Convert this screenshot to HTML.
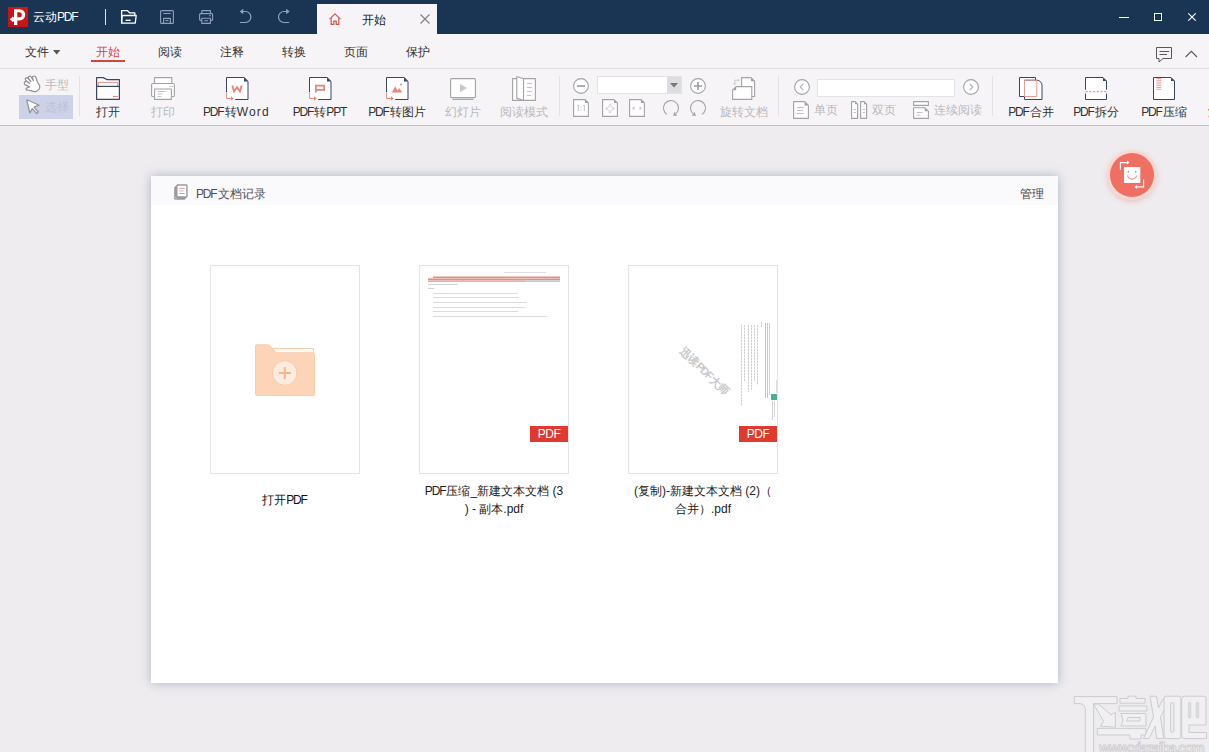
<!DOCTYPE html>
<html lang="zh">
<head>
<meta charset="utf-8">
<title>云动PDF</title>
<style>
*{box-sizing:border-box;margin:0;padding:0}
html,body{width:1209px;height:752px;overflow:hidden}
body{position:relative;background:#eeecef;font-family:"Liberation Sans",sans-serif;font-size:12px;color:#333;line-height:1}
.abs{position:absolute}
.t{position:absolute;white-space:nowrap;line-height:14px;height:14px}
.c{text-align:center}
svg{position:absolute;overflow:visible}
#title{position:absolute;left:0;top:0;width:1209px;height:34px;background:#1a3454}
#tab{position:absolute;left:317px;top:4px;width:120px;height:30px;background:#f6f4f7}
#menu{position:absolute;left:0;top:34px;width:1209px;height:34px;background:#f6f4f7}
#tool{position:absolute;left:0;top:68px;width:1209px;height:58px;background:#f6f4f7;border-top:1px solid #dedde0;border-bottom:1px solid #c0bfc3}
.sep{position:absolute;width:1px;background:#e3e2e6;top:76px;height:40px}
.g{color:#b9b9bb}
.d{color:#333}
#panel{position:absolute;left:151px;top:176px;width:907px;height:507px;background:#fff;box-shadow:0 0 10px rgba(128,140,165,.6)}
#phead{position:absolute;left:0;top:0;width:907px;height:29px;background:#faf9fc}
.card{position:absolute;top:265px;width:150px;height:209px;background:#fff;border:1px solid #e4e4e6}
.badge{position:absolute;width:38px;height:16px;background:#e03a30;color:#fff;font-size:12px;line-height:16px;text-align:center;top:426px}
.ln{position:absolute;height:1px;background:#dcdcdf}
.vl{position:absolute;width:1px;background:repeating-linear-gradient(to bottom,#d2d2d5 0 2px,#ececee 2px 3px)}
.l{letter-spacing:-1.2px}
</style>
</head>
<body>
<!-- TITLE BAR -->
<div id="title"></div>
<!-- logo -->
<svg style="left:8px;top:7px" width="20" height="20" viewBox="0 0 20 20">
  <defs><linearGradient id="lg" x1="0" y1="1" x2="1" y2="0"><stop offset="0" stop-color="#b5161d"/><stop offset="1" stop-color="#e3100f"/></linearGradient></defs>
  <rect width="20" height="20" fill="url(#lg)"/>
  <path d="M6 2.2h5.6a5.6 5.6 0 0 1 0 11.2H9.3V18H6v-4.1L4.8 15 1.8 12.3 4.8 9.6 6 10.7z M9.3 5.3v5h2a2.5 2.5 0 0 0 0-5z" fill="#fff" fill-rule="evenodd"/>
</svg>
<span class="t" style="left:33px;top:10px;color:#fff">云动<span class="l">PD</span>F</span>
<div class="abs" style="left:105px;top:9px;width:1px;height:16px;background:#dfe4ec"></div>
<!-- open -->
<svg style="left:120px;top:9px" width="17" height="16" viewBox="0 0 17 16" fill="none" stroke="#fff" stroke-width="1.3" stroke-linejoin="round">
  <path d="M1.6 14.2V1.6h5.6l2.4 2.2h5.2v2.7"/>
  <path d="M1.6 14.2 2.2 6.5h14l-1 7.7z"/>
  <path d="M5.6 11.3h5" stroke-width="1.4"/>
</svg>
<!-- save -->
<svg style="left:160px;top:10px" width="14" height="14" viewBox="0 0 14 14" fill="none" stroke="#8fa0bc" stroke-width="1.1" stroke-linejoin="round">
  <path d="M1.6.6h10.8a1 1 0 0 1 1 1v10.8a1 1 0 0 1-1 1H1.6a1 1 0 0 1-1-1V1.6a1 1 0 0 1 1-1z"/>
  <path d="M3.3 3.5h7.4"/>
  <path d="M3.6 13.4V8.4h6.8v5"/>
  <path d="M5.5 10.6h3"/>
</svg>
<!-- print -->
<svg style="left:199px;top:10px" width="15" height="14" viewBox="0 0 15 14" fill="none" stroke="#8fa0bc" stroke-width="1.1" stroke-linejoin="round">
  <path d="M2.8 3.6V.6h8.6v3"/>
  <path d="M2.8 10.4H1.4a.8.8 0 0 1-.8-.8V4.4a.8.8 0 0 1 .8-.8h11.4a.8.8 0 0 1 .8.8v5.2a.8.8 0 0 1-.8.8h-1.4"/>
  <path d="M2.8 8.2h8.6v5.2H2.8z"/>
  <path d="M5.2 10.7h3.8M10.3 5.6h1.4"/>
</svg>
<!-- undo -->
<svg style="left:240px;top:9px" width="12" height="15" viewBox="0 0 12 15" fill="none" stroke="#8fa3c2" stroke-width="1.2">
  <path d="M2 2.5h3.4a5.5 5.5 0 0 1 0 11H0"/>
  <path d="M3.2-.2-.2 2.5l3.4 2.7z" fill="#8fa3c2" stroke="none"/>
</svg>
<!-- redo -->
<svg style="left:278px;top:9px" width="12" height="15" viewBox="0 0 12 15" fill="none" stroke="#8fa3c2" stroke-width="1.2">
  <path d="M9.4 2.5H6a5.5 5.5 0 0 0 0 11h5.2"/>
  <path d="M8.2-.2l3.4 2.7-3.4 2.7z" fill="#8fa3c2" stroke="none"/>
</svg>
<div id="tab"></div>
<!-- home -->
<svg style="left:329px;top:13px" width="12" height="12" viewBox="0 0 12 12" fill="none" stroke="#d0544a" stroke-width="1.200" stroke-linejoin="round">
  <path d="M.6 6.2 6 .8l5.4 5.4"/>
  <path d="M2.2 5.2v6.2h2.6V8.2h2.4v3.2h2.6V5.2"/>
</svg>
<span class="t" style="left:362px;top:13px;color:#222">开始</span>
<svg style="left:420px;top:14px" width="10" height="10" viewBox="0 0 10 10" stroke="#808083" stroke-width="1.200"><path d="M.5.500l9 9M9.500.5l-9 9"/></svg>
<!-- window controls -->
<div class="abs" style="left:1119px;top:17px;width:10px;height:1px;background:#fff"></div>
<div class="abs" style="left:1154px;top:13px;width:8px;height:8px;border:1px solid #fff"></div>
<svg style="left:1188px;top:13px" width="8" height="8" viewBox="0 0 8 8" stroke="#fff" stroke-width="1.150"><path d="M.3.300l7.400 7.400M7.700.3.3 7.700"/></svg>
<div id="menu"></div>
<span class="t" style="left:25px;top:45px">文件</span>
<svg style="left:53px;top:50px" width="8" height="5" viewBox="0 0 8 5"><path d="M0 0h7.4L3.7 4.4z" fill="#555"/></svg>
<span class="t" style="left:96px;top:45px;color:#d8463a">开始</span>
<div class="abs" style="left:91px;top:60px;width:34px;height:2px;background:#d0483c"></div>
<span class="t" style="left:158px;top:45px">阅读</span>
<span class="t" style="left:220px;top:45px">注释</span>
<span class="t" style="left:282px;top:45px">转换</span>
<span class="t" style="left:344px;top:45px">页面</span>
<span class="t" style="left:406px;top:45px">保护</span>
<!-- comment icon -->
<svg style="left:1156px;top:47px" width="16" height="16" viewBox="0 0 16 16" fill="none" stroke="#58585b" stroke-width="1" stroke-linejoin="miter">
  <path d="M.5.500h15v11H7L3 15v-3.500H.5z"/>
  <path d="M3.500 4.500h9.500M3.500 7.500h7.500"/>
</svg>
<svg style="left:1185px;top:50px" width="13" height="8" viewBox="0 0 13 8" fill="none" stroke="#58585b" stroke-width="1.100"><path d="M.6 7 6.300 1.300 12 7"/></svg>
<div id="tool"></div>
<!-- hand / select -->
<svg style="left:24px;top:76px" width="17" height="16" viewBox="0 0 17 16" fill="#fff" stroke="#939396" stroke-width="1.250" stroke-linejoin="round" stroke-linecap="round">
  <path d="M5.700 11 1 8.600Q-.4 7.400.6 6 1.600 4.800 3 5.800L5.600 7.400 2 4.600Q.6 3.200 1.800 2.200 3 1.200 4.200 2.600L6.800 5.600 4.600 2.400Q3.800.8 5.200.3 6.600-.2 7.400 1.400L9.400 4.600 8.600 1.800Q8.400 0 10 0 11.400 0 12 1.700L13.300 5.800Q14.200 7.600 15.600 9.300 16 11 15.300 12.800 14 15.200 11.800 15.600 9.500 15.800 7.700 14.900L3.600 14Q2 14.200 2 13 2 12.200 3 11.900Z"/>
</svg>
<span class="t g" style="left:45px;top:78px">手型</span>
<div class="abs" style="left:19px;top:95px;width:54px;height:24px;background:#ced2e9"></div>
<svg style="left:26px;top:99px" width="14" height="15" viewBox="0 0 14 15" fill="#fff" stroke="#959598" stroke-width="1.250" stroke-linejoin="round">
  <path d="M.8.800 13.200 6.200 8 8.200l4.300 4.800-1.700 1.500-4.300-4.900-2.500 4.300z"/>
</svg>
<span class="t" style="left:45px;top:100px;color:#bcc0d7">选择</span>
<div class="sep" style="left:79px"></div>
<!-- open -->
<svg style="left:96px;top:77px" width="24" height="23" viewBox="0 0 24 23" fill="none" stroke-linejoin="round">
  <path d="M.6 22.300V.600h6.600l4 2.100h12.200v19.600z" fill="#fff" stroke="#3a4467" stroke-width="1.200"/>
  <path d="M2.300 9V5.300h19.400V9" stroke="#e78a7e" stroke-width="1"/>
  <path d="M.6 9.400h22.800" stroke="#3a4467" stroke-width="1.200"/>
  <path d="M17 19.500h5" stroke="#e78a7e" stroke-width="1.100"/>
</svg>
<span class="t d" style="left:96px;top:105px">打开</span>
<!-- print -->
<svg style="left:151px;top:77px" width="24" height="23" viewBox="0 0 24 23" fill="#fff" stroke="#a3a3a6" stroke-width="1.100" stroke-linejoin="round">
  <path d="M3.500 6.500V.600h17.300v5.900"/>
  <path d="M1.600 6.500h20.800a1 1 0 0 1 1 1v11a1 1 0 0 1-1 1H1.600a1 1 0 0 1-1-1v-11a1 1 0 0 1 1-1z"/>
  <path d="M3.600 12h16.800v10.400H3.600z"/>
  <path d="M6.500 14.500h8M6.500 17h5M6.500 19.500h4" stroke="#c4c4c7" stroke-width="1"/>
  <path d="M18.500 9.500h1M20.800 9.500h1" stroke-width="1.200"/>
</svg>
<span class="t g" style="left:151px;top:105px">打印</span>
<!-- pdf to word -->
<svg style="left:226px;top:77px" width="23" height="23" viewBox="0 0 23 23" fill="none" stroke-linejoin="round">
  <path d="M.5.500h17.700l3.800 3.800v18.200H.5z" fill="#fff"/>
  <path d="M.5 15.200V.500h17.700l3.800 3.800v18.200H9.200" stroke="#3a4467" stroke-width="1"/>
  <path d="M18 .500l4 4H18z" fill="#3a4467"/>
  <path d="M.6 16v5.500h4.800" stroke="#e78a7e" stroke-width="1"/>
  <path d="M5 19.300 7.800 21.500 5 23.700z" fill="#e78a7e"/>
  <path d="M6.300 8.400l1.700 6 3-4.200 3 4.200 1.700-6" stroke="#e8837b" stroke-width="1.900" stroke-linejoin="miter"/>
</svg>
<span class="t d" style="left:203px;top:105px;width:67px;text-align:center"><span class="l">PD</span>F转<span style="letter-spacing:1.2px">Word</span></span>
<!-- pdf to ppt -->
<svg style="left:309px;top:77px" width="23" height="23" viewBox="0 0 23 23" fill="none" stroke-linejoin="round">
  <path d="M.5.500h17.700l3.800 3.800v18.200H.5z" fill="#fff"/>
  <path d="M.5 15.200V.500h17.700l3.800 3.800v18.200H9.200" stroke="#3a4467" stroke-width="1"/>
  <path d="M18 .500l4 4H18z" fill="#3a4467"/>
  <path d="M.6 16v5.500h4.800" stroke="#e78a7e" stroke-width="1"/>
  <path d="M5 19.300 7.800 21.500 5 23.700z" fill="#e78a7e"/>
  <path d="M6.900 15.400V8.600h8.300v4.300H7.500" stroke="#e8837b" stroke-width="1.700" stroke-linejoin="miter"/>
</svg>
<span class="t d" style="left:290px;top:105px;width:60px;text-align:center"><span class="l">PD</span>F转<span class="l">PP</span>T</span>
<!-- pdf to image -->
<svg style="left:386px;top:77px" width="23" height="23" viewBox="0 0 23 23" fill="none" stroke-linejoin="round">
  <path d="M.5.500h17.700l3.800 3.800v18.200H.5z" fill="#fff"/>
  <path d="M.5 15.200V.500h17.700l3.800 3.800v18.200H9.200" stroke="#3a4467" stroke-width="1"/>
  <path d="M18 .500l4 4H18z" fill="#3a4467"/>
  <path d="M.6 16v5.500h4.800" stroke="#e78a7e" stroke-width="1"/>
  <path d="M5 19.300 7.800 21.500 5 23.700z" fill="#e78a7e"/>
  <path d="M5.800 15.600l3.400-6 2.400 4 1.600-2.600 3 4.600z" fill="#e8837b"/>
  <circle cx="15" cy="7.500" r="1" fill="#e8837b"/>
</svg>
<span class="t d" style="left:366px;top:105px;width:62px;text-align:center"><span class="l">PD</span>F转图片</span>
<!-- slideshow -->
<svg style="left:450px;top:78px" width="26" height="22" viewBox="0 0 26 22" fill="none" stroke="#a3a3a6" stroke-width="1.100">
  <rect x=".6" y=".6" width="24.800" height="19" rx="1" fill="#fff"/>
  <path d="M2.500 21.400h21" />
  <path d="M10 6l7 4.100-7 4.100z" fill="#c9c9cc" stroke="none"/>
</svg>
<span class="t g" style="left:445px;top:105px">幻灯片</span>
<!-- reading mode -->
<svg style="left:512px;top:76px" width="24" height="25" viewBox="0 0 24 25" fill="#fff" stroke="#a3a3a6" stroke-width="1.100" stroke-linejoin="round">
  <path d="M.6 2.600h22.800v21.800H.6z"/>
  <path d="M4.800.600 11.500 2.800v21.600l-6.700-2z"/>
  <path d="M15 7.500h5M15 11.500h5M15 15.500h5M15 19.500h4" stroke="#c4c4c7"/>
</svg>
<span class="t g" style="left:500px;top:105px">阅读模式</span>
<div class="sep" style="left:559px"></div>
<!-- zoom out -->
<svg style="left:573px;top:78px" width="16" height="16" viewBox="0 0 16 16" fill="#fff" stroke="#a3a3a6" stroke-width="1.100">
  <circle cx="8" cy="8" r="7.400"/><path d="M4 8h8" stroke-width="1.600" stroke="#9b9b9e"/>
</svg>
<div class="abs" style="left:597px;top:76px;width:85px;height:18px;background:#fff;border:1px solid #e2e1e5"></div>
<div class="abs" style="left:667px;top:77px;width:14px;height:16px;background:#dddce0"></div>
<svg style="left:670px;top:83px" width="8" height="5" viewBox="0 0 8 5"><path d="M0 0h8L4 4.600z" fill="#77777a"/></svg>
<!-- zoom in -->
<svg style="left:690px;top:78px" width="16" height="16" viewBox="0 0 16 16" fill="#fff" stroke="#a3a3a6" stroke-width="1.100">
  <circle cx="8" cy="8" r="7.400"/><path d="M4 8h8M8 4v8" stroke-width="1.600" stroke="#9b9b9e"/>
</svg>
<!-- 1:1 -->
<svg style="left:573px;top:99px" width="16" height="18" viewBox="0 0 16 18" fill="#fff" stroke="#a3a3a6" stroke-width="1.100" stroke-linejoin="round">
  <path d="M.6.600h11.400l3.400 3.400v13.400H.6z"/><path d="M12 .600v3.400h3.400z" fill="#a3a3a6" stroke="none"/>
  <path d="M4.300 6.600 5.300 6v6M10.300 6.600 11.300 6v6" stroke="#c2c2c5" stroke-width="1"/>
  <path d="M8 7.500v1M8 10.500v1" stroke="#c2c2c5" stroke-width="1"/>
</svg>
<!-- fit page -->
<svg style="left:602px;top:99px" width="16" height="18" viewBox="0 0 16 18" fill="#fff" stroke="#a3a3a6" stroke-width="1.100" stroke-linejoin="round">
  <path d="M.6.600h11.400l3.400 3.400v13.400H.6z"/><path d="M12 .600v3.400h3.400z" fill="#a3a3a6" stroke="none"/>
  <circle cx="8" cy="9.500" r="2.600" stroke="#dadadd" stroke-width="1"/>
  <path d="M8 4.500l1.800 1.800H6.200zM8 14.500l1.800-1.800H6.200zM3 9.500l1.800-1.800v3.600zM13 9.500l-1.800-1.800v3.600z" fill="#d0d0d3" stroke="none"/>
</svg>
<!-- fit width -->
<svg style="left:629px;top:99px" width="16" height="18" viewBox="0 0 16 18" fill="#fff" stroke="#a3a3a6" stroke-width="1.100" stroke-linejoin="round">
  <path d="M.6.600h11.400l3.400 3.400v13.400H.6z"/><path d="M12 .600v3.400h3.400z" fill="#a3a3a6" stroke="none"/>
  <path d="M3 9.300l2.600-2.200v4.400zM13 9.300l-2.600-2.200v4.400z" fill="#cfcfd2" stroke="none"/>
</svg>
<!-- rotate cw -->
<svg style="left:663px;top:99px" width="16" height="18" viewBox="0 0 16 18" fill="none" stroke="#a3a3a6" stroke-width="1.100">
  <path d="M4 15.400A7.500 7.500 0 1 1 13.300 14.300"/>
  <path d="M9.900 16.700h4.200L11.700 12.800z" fill="#a3a3a6" stroke="none"/>
</svg>
<!-- rotate ccw -->
<svg style="left:690px;top:99px" width="16" height="18" viewBox="0 0 16 18" fill="none" stroke="#a3a3a6" stroke-width="1.100">
  <path d="M12 15.400A7.500 7.500 0 1 0 2.700 14.300"/>
  <path d="M6.100 16.700H1.900L4.300 12.800z" fill="#a3a3a6" stroke="none"/>
</svg>
<!-- rotate doc -->
<svg style="left:732px;top:77px" width="24" height="23" viewBox="0 0 24 23" fill="#fff" stroke="#a3a3a6" stroke-width="1.100" stroke-linejoin="round">
  <path d="M9.600.600h9.400l3.600 3.600v15.300H9.600z"/><path d="M19 .600v3.600h3.600z" fill="#a3a3a6" stroke="none"/>
  <path d="M.6 13.200l3.600-3.600h15.600v12.800H.6z"/><path d="M.6 13.200h3.600V9.600z" fill="#a3a3a6" stroke="none"/>
  <path d="M2.800 7V3.200h3.800" fill="none" stroke="#cdcdd0" stroke-width="1"/>
  <path d="M6 1.600l1.800 1.600L6 4.800zM1.200 6.400l1.600 1.800 1.600-1.800z" fill="#cdcdd0" stroke="none"/>
</svg>
<span class="t g" style="left:720px;top:105px">旋转文档</span>
<div class="sep" style="left:778px"></div>
<!-- prev -->
<svg style="left:794px;top:79px" width="16" height="16" viewBox="0 0 16 16" fill="#fff" stroke="#a3a3a6" stroke-width="1.100">
  <circle cx="8" cy="8" r="7.400"/><path d="M9.300 4.800 6.200 8l3.100 3.200" fill="none" stroke="#b0b0b3" stroke-width="1.100"/>
</svg>
<div class="abs" style="left:817px;top:79px;width:138px;height:18px;background:#fff;border:1px solid #e4e3e7"></div>
<!-- next -->
<svg style="left:963px;top:79px" width="16" height="16" viewBox="0 0 16 16" fill="#fff" stroke="#a3a3a6" stroke-width="1.100">
  <circle cx="8" cy="8" r="7.400"/><path d="M6.700 4.800 9.800 8l-3.100 3.200" fill="none" stroke="#b0b0b3" stroke-width="1.100"/>
</svg>
<!-- single page -->
<svg style="left:793px;top:101px" width="16" height="18" viewBox="0 0 16 18" fill="#fff" stroke="#a3a3a6" stroke-width="1.100" stroke-linejoin="round">
  <path d="M.6.600h11l3.800 3.800v13H.6z"/><path d="M11.600.600v3.800h3.800z" fill="#a3a3a6" stroke="none"/>
  <path d="M4 6.500h7M4 9.500h6M4 12.500h7" stroke="#c2c2c5" stroke-width="1"/>
</svg>
<span class="t g" style="left:814px;top:103px">单页</span>
<!-- double page -->
<svg style="left:851px;top:101px" width="16" height="18" viewBox="0 0 16 18" fill="#fff" stroke="#a3a3a6" stroke-width="1.100" stroke-linejoin="round">
  <path d="M.6.600h3.600l2.400 2.600v14.200H.6z"/><path d="M9.600.600h3.600l2.400 2.600v14.200H9.600z"/>
  <path d="M4 .600v2.600h2.600zM13 .600v2.600h2.600z" fill="#a3a3a6" stroke="none"/>
  <path d="M2.500 8.500h2.500M2.500 11.500h2.500M11.500 8.500h2.500M11.500 11.500h2.500" stroke="#c2c2c5" stroke-width="1"/>
</svg>
<span class="t g" style="left:872px;top:103px">双页</span>
<!-- continuous -->
<svg style="left:913px;top:101px" width="16" height="18" viewBox="0 0 16 18" fill="#fff" stroke="#a3a3a6" stroke-width="1.100" stroke-linejoin="round">
  <path d="M.6.600h14.800v3.800H.6z"/>
  <path d="M.6 6.800h11.200l3.600 3.400v7.200H.6z"/><path d="M11.800 6.800v3.400h3.600z" fill="#a3a3a6" stroke="none"/>
  <path d="M3.500 11.500h6M3.500 14.200h4" stroke="#c2c2c5" stroke-width="1"/>
</svg>
<span class="t g" style="left:934px;top:103px">连续阅读</span>
<div class="sep" style="left:992px"></div>
<!-- merge -->
<svg style="left:1019px;top:77px" width="24" height="23" viewBox="0 0 24 23" fill="#fff" stroke-linejoin="round">
  <path d="M.5.500h16v19H.5z" stroke="#3a4467" stroke-width="1"/>
  <path d="M5.500 3.200h12.300a5.200 5.200 0 0 1 5.200 5.200v14.100H5.500z" stroke="#3a4467" stroke-width="1"/>
  <path d="M5.500 3.200h12.300v16.300H5.500z" fill="none" stroke="#e79d95" stroke-width="1"/>
</svg>
<span class="t d" style="left:1006px;top:105px;width:50px;text-align:center"><span class="l">PD</span>F合并</span>
<!-- split -->
<svg style="left:1085px;top:77px" width="22" height="23" viewBox="0 0 22 23" fill="none" stroke-linejoin="round">
  <path d="M.5.500h17.500l3.500 3.500v18.500H.5z" fill="#fff"/>
  <path d="M.5 12.800V.500h17.500l3.500 3.500v8.800M21.500 16.600v5.900H.5v-5.900" stroke="#3a4467" stroke-width="1"/>
  <path d="M18 .500l3.500 3.500H18z" fill="#3a4467"/>
  <path d="M.5 14.700h21" stroke="#e78a7e" stroke-width="1" stroke-dasharray="2.400 1.300"/>
</svg>
<span class="t d" style="left:1071px;top:105px;width:50px;text-align:center"><span class="l">PD</span>F拆分</span>
<!-- compress -->
<svg style="left:1153px;top:77px" width="22" height="23" viewBox="0 0 22 23" fill="none" stroke-linejoin="round">
  <path d="M.5.500h17.500l3.500 3.500v18.500H.5z" fill="#fff" stroke="#3a4467" stroke-width="1"/>
  <path d="M18 .500l3.500 3.500H18z" fill="#3a4467"/>
  <path d="M3.400 1.500h5M3.400 3.300h5M3.400 5.100h5M3.400 6.900h5M3.400 8.700h5M3.400 10.500h5M3.400 12.300h5" stroke="#ea8d85" stroke-width=".8"/>
</svg>
<span class="t d" style="left:1139px;top:105px;width:50px;text-align:center"><span class="l">PD</span>F压缩</span>
<span class="t d" style="left:1208px;top:105px">添加水印</span>
<!-- MAIN PANEL -->
<div id="panel"><div id="phead"></div></div>
<!-- header icon -->
<svg style="left:174px;top:184px" width="14" height="16" viewBox="0 0 14 16">
  <path d="M3.200.2h9Q13.600.2 13.600 1.600V12.400L10.600 15.700H1.600Q.2 15.700.2 14.300V3.400Z" fill="#9b9b9e"/>
  <rect x="3.500" y="1.700" width="8.700" height="10.600" rx=".6" fill="#fff"/>
  <path d="M1.300 13.400l1.300 1" stroke="#e8e8ea" stroke-width=".9"/>
  <path d="M5.200 4.400h5.600M5.200 9.500h5.600" stroke="#c5a8a8" stroke-width="1"/>
  <path d="M5.200 6.900h4.400" stroke="#efaca6" stroke-width="1"/>
</svg>
<span class="t" style="left:196px;top:187px;color:#505053"><span class="l">PD</span>F文档记录</span>
<span class="t" style="left:1020px;top:187px;color:#444">管理</span>
<!-- card 1 -->
<div class="card" style="left:210px"></div>
<svg style="left:255px;top:343.5px" width="60" height="52" viewBox="0 0 60 52">
  <path d="M18.500 4.500h40v6h-40z" fill="#fffaf6" stroke="#f8cdb0" stroke-width="1"/>
  <path d="M2 .800h10.500q1.800 0 3 1.500l4 5q1.200 1.500 3 1.500H58a1.500 1.500 0 0 1 1.500 1.500v39.700a1.500 1.500 0 0 1-1.500 1.500H2A1.500 1.500 0 0 1 .5 50V2.300A1.500 1.500 0 0 1 2 .800z" fill="#fcd5b9" stroke="#f9cbaa" stroke-width="1"/>
  <circle cx="29.800" cy="29" r="12.300" fill="#fdebdf" stroke="#f8c9a7" stroke-width="1"/>
  <path d="M23.800 29h12M29.800 23v12" stroke="#f1b68e" stroke-width="1.900"/>
</svg>
<span class="t c" style="left:210px;top:493px;width:150px;color:#111">打开<span class="l">PD</span>F</span>
<!-- card 2 -->
<div class="card" style="left:419px"></div>
<div id="th2">
<div class="ln" style="left:504px;top:272px;width:42px;background:#dededf"></div>
<div class="ln" style="left:433px;top:276px;width:127px;background:#efc6c2"></div>
<div class="ln" style="left:433px;top:277px;width:127px;background:#de908a"></div>
<div class="ln" style="left:428px;top:278px;width:132px;background:#edc0bc"></div>
<div class="ln" style="left:428px;top:279px;width:132px;background:#de908a"></div>
<div class="ln" style="left:428px;top:280px;width:97px;background:#eabdb9"></div>
<div class="ln" style="left:525px;top:280px;width:35px;background:#d4d4d7"></div>
<div class="ln" style="left:428px;top:281px;width:97px;background:#e6b4b0"></div>
<div class="ln" style="left:525px;top:281px;width:35px;background:#cdcdd0"></div>
<div class="ln" style="left:428px;top:284px;width:30px;background:#d2d2d5"></div>
<div class="ln" style="left:428px;top:288px;width:6px;background:#d2d2d5"></div>
<div class="ln" style="left:433px;top:293px;width:85px"></div>
<div class="ln" style="left:433px;top:297px;width:86px"></div>
<div class="ln" style="left:433px;top:302px;width:94px"></div>
<div class="ln" style="left:433px;top:307px;width:92px"></div>
<div class="ln" style="left:433px;top:311px;width:85px"></div>
<div class="ln" style="left:433px;top:316px;width:114px"></div>
</div>
<div class="badge" style="left:530px"><span style="letter-spacing:-.5px">PDF</span></div>
<span class="t c" style="left:414px;top:484px;width:160px;color:#222"><span class="l">PD</span>F压缩_新建文本文档 (3</span>
<span class="t c" style="left:414px;top:502px;width:160px;color:#222">) - 副本.pdf</span>
<!-- card 3 -->
<div class="card" style="left:628px"></div>
<span class="t" style="left:669px;top:364px;width:72px;text-align:center;color:#c9c9cc;font-weight:bold;font-size:11px;transform:rotate(44deg)">迅读<span class="l">PD</span>F大师</span>
<div id="th3">
<div class="vl" style="left:741px;top:325px;height:81px"></div>
<div class="vl" style="left:744px;top:325px;height:57px"></div>
<div class="vl" style="left:748px;top:325px;height:67px"></div>
<div class="vl" style="left:751px;top:325px;height:65px"></div>
<div class="vl" style="left:754px;top:325px;height:56px"></div>
<div class="vl" style="left:757px;top:325px;height:60px"></div>
<div class="vl" style="left:761px;top:322px;height:5px"></div>
<div class="vl" style="left:765px;top:323px;height:75px;background:#c3c3c6"></div>
<div class="vl" style="left:767px;top:323px;height:75px;background:#c9c9cc"></div>
<div class="vl" style="left:769px;top:323px;height:72px;background:#d2d2d5"></div>
<div class="abs" style="left:771px;top:394px;width:6px;height:6px;background:#4db08a"></div>
<div class="vl" style="left:772px;top:401px;height:19px;background:#d2d2d5"></div>
<div class="vl" style="left:774px;top:401px;height:16px;background:#d8d8db"></div>
<div class="vl" style="left:776px;top:380px;height:13px;background:#dcdcdf"></div>
</div>
<div class="badge" style="left:739px"><span style="letter-spacing:-.5px">PDF</span></div>
<span class="t c" style="left:623px;top:484px;width:160px;color:#222">(复制)-新建文本文档 (2)（</span>
<span class="t c" style="left:623px;top:502px;width:160px;color:#222">合并）.pdf</span>
<!-- floating button -->
<div class="abs" style="left:1107px;top:150px;width:50px;height:50px;border-radius:50%;background:#fbd8d3;box-shadow:0 2px 5px rgba(230,150,140,.45)"></div>
<div class="abs" style="left:1110px;top:153px;width:44px;height:44px;border-radius:50%;background:#ef6f63"></div>
<svg style="left:1118px;top:160px" width="28" height="30" viewBox="0 0 28 30" fill="none">
  <rect x="6" y="7" width="16.300" height="16" fill="#fff"/>
  <circle cx="10.400" cy="11.700" r=".9" fill="#e8857b"/><circle cx="17.700" cy="11.700" r=".9" fill="#e8857b"/>
  <path d="M9.600 15.500a4.600 4.600 0 0 0 9 0" stroke="#e8857b" stroke-width="1.100"/>
  <path d="M2.400 10V2.600h7" stroke="#fff" stroke-width="1.100"/>
  <path d="M9 .600l2.400 2L9 4.600z" fill="#fff"/>
  <path d="M25.600 19.500v7.400h-7" stroke="#fff" stroke-width="1.100"/>
  <path d="M19 24.900l-2.400 2 2.400 2z" fill="#fff"/>
</svg>
<!-- watermark (site logo drawn as shapes + url text) -->
<svg style="left:1070px;top:690px" width="139" height="62" viewBox="0 0 139 62" font-family="Liberation Sans, sans-serif" font-weight="bold">
  <g fill="#f0eff2" stroke="#cccbd0" stroke-width="1" stroke-linejoin="round">
    <path d="M4.200 6.600H47.100V13.600H23.600V63H15.300V20Q15.300 13.600 9 13.600H4.200Z"/>
    <path d="M23.600 14.200 33.500 31.300 30.600 36.300 45.400 37.100V22.300L40.900 24.700 28.500 14Z"/>
    <path d="M27.300 38.400H76V45H71V49H60V45H27.300Z"/>
    <path d="M50 8.500H58V6.200H66V8.500H75V13.200H50Z"/>
    <path d="M49 16H77V21H49Z"/>
    <path d="M51 23.500H76V36H51L53 30Z"/>
    <path d="M58 27.500H70V31H56.500Z" fill="#eeedf0"/>
    <path d="M80 6.200H86.500L88.500 18 93 9H99.500L90.500 27 93.800 48.600H86.500L85.200 36 79 48.600H73.500L83.500 27Z"/>
    <rect x="94" y="6.200" width="16.900" height="42.400" rx="2.500"/>
    <rect x="100.600" y="12.800" width="3.300" height="29.200" rx=".8" fill="#eeedf0"/>
    <path d="M111.700 8.700Q111.700 6.200 114.200 6.200H133.500Q136 6.200 136 8.700V35H119V42.500H136.500V48.600H114.200Q111.700 48.600 111.700 46.100Z"/>
    <rect x="118.300" y="12.800" width="2.500" height="14.800" fill="#dcdbdf" stroke="#d6d5d9"/>
    <rect x="126.200" y="12.800" width="2.500" height="14.800" fill="#dcdbdf" stroke="#d6d5d9"/>
  </g>
  <text x="29" y="62.500" font-size="14.500" textLength="106" lengthAdjust="spacing" fill="#f0eff2" stroke="#cfced2" stroke-width=".9">www.xiazaiba.com</text>
</svg>
</body>
</html>
